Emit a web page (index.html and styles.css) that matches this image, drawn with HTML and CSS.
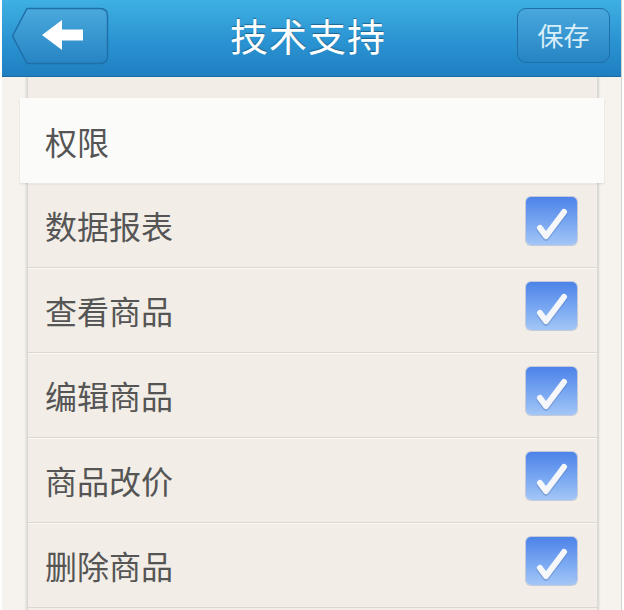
FILE: index.html
```html
<!DOCTYPE html>
<html lang="zh-CN">
<head>
    <meta charset="UTF-8">
    <title>技术支持</title>
    <link rel="stylesheet" href="styles.css">
</head>
<body>
<div class="page">
    <!-- 顶部栏 -->
    <div class="topbar">
        <a class="back" href="javascript:void(0)">
            <svg width="98" height="58" viewBox="0 0 98 58">
                <defs>
                    <linearGradient id="gb" x1="0" y1="0" x2="0" y2="1">
                        <stop offset="0" stop-color="#4aa9dc"/>
                        <stop offset="1" stop-color="#2784c4"/>
                    </linearGradient>
                </defs>
                <path d="M16 1.5 H89 Q96.5 1.5 96.5 9 V49 Q96.5 56.5 89 56.5 H16 L1.5 29 Z" fill="url(#gb)" stroke="#1f6fa9" stroke-width="1.5"/>
                <path d="M31 28 L51 13 V22.5 H72 V33.5 H51 V43 Z" fill="#fff"/>
            </svg>
        </a>
        <div class="title">技术支持</div>
        <a class="save" href="javascript:void(0)">保存</a>
    </div>
    <div class="content">
        <div class="card">
            <div class="gap"></div>
            <div class="group">权限</div>
            <div class="row"><span>数据报表</span><i class="check"></i></div>
            <div class="row"><span>查看商品</span><i class="check"></i></div>
            <div class="row"><span>编辑商品</span><i class="check"></i></div>
            <div class="row"><span>商品改价</span><i class="check"></i></div>
            <div class="row"><span>删除商品</span><i class="check"></i></div>
        </div>
    </div>
</div>
<script>
    // 勾选框统一画成svg
    var svg = '<svg width="51" height="48" viewBox="0 0 51 48"><path d="M14 31 L20 39 L38 15" fill="none" stroke="#5a7fb8" stroke-opacity="0.45" stroke-width="6.5" stroke-linecap="round" stroke-linejoin="round" transform="translate(0,1.5)"/><path d="M14 31 L20 39 L38 15" fill="none" stroke="#f6f7fa" stroke-width="6" stroke-linecap="round" stroke-linejoin="round"/></svg>';
    var checks = document.getElementsByClassName("check");
    for(var i=0;i<checks.length;i++){
        checks[i].innerHTML = svg;
    }
</script>
</body>
</html>
```

FILE: styles.css
```css
*{
    padding: 0px;
    margin: 0px;
}
body{
    width: 624px;
    height: 610px;
    overflow: hidden;
    background: #fff;
    font-family: "Noto Sans CJK SC", "Noto Sans", sans-serif;
}
.page{
    margin-left: 2px;
    width: 619px;
    height: 610px;
    border-right: 1px solid #d6d3cf;
    background: #f6f3ee;
}
.topbar{
    height: 76px;
    border-bottom: 1px solid #1a69a3;
    background: linear-gradient(#3fb0e2, #2a93d2 55%, #1f7fc1);
    display: flex;
    align-items: center;
    justify-content: space-between;
    padding: 0 11px 0 9px;
    position: relative;
    z-index: 2;
}
.back{
    display: block;
    height: 58px;
    margin-top: -5px;
}
.title{
    color: #fff;
    font-size: 38px;
    letter-spacing: 1px;
    text-shadow: 0 -1px 1px rgba(0,0,0,0.35);
    margin-right: 10px;
    margin-top: -8px;
}
.save{
    display: block;
    width: 93px;
    height: 55px;
    margin-top: -6px;
    box-sizing: border-box;
    border: 1.5px solid #1f6fa9;
    border-radius: 9px;
    background: linear-gradient(#48a8dc, #2784c4);
    color: #d8eef9;
    font-size: 26px;
    line-height: 52px;
    text-align: center;
    text-decoration: none;
}
.content{
    padding: 0 24px 0 26px;
}
.card{
    background: #f2ede6;
    box-shadow: -2px 0 2px rgba(0,0,0,0.12), 2px 0 2px rgba(0,0,0,0.12);
    height: 534px;
}
.gap{
    height: 21px;
}
.group{
    margin: 0 -7px 0 -8px;
    height: 85px;
    padding-left: 25px;
    background: #fbfbfa;
    box-shadow: 0 1px 2px rgba(0,0,0,0.1);
    display: flex;
    align-items: center;
    font-size: 32px;
    color: #555;
    position: relative;
}
.row{
    height: 84px;
    border-bottom: 1px solid #ddd6cc;
    box-shadow: inset 0 1px 0 #fbf9f6;
    display: flex;
    align-items: center;
    justify-content: space-between;
    padding: 0 20px 0 17px;
    font-size: 32px;
    color: #555;
}
.check{
    display: block;
    width: 51px;
    height: 48px;
    margin-top: -8px;
    border-radius: 5px;
    background: linear-gradient(#4d83e9, #7eabf2 60%, #a3c6f6);
    box-shadow: 0 0 0 1px rgba(60,100,180,0.25);
}
.check svg{
    display: block;
}
```
